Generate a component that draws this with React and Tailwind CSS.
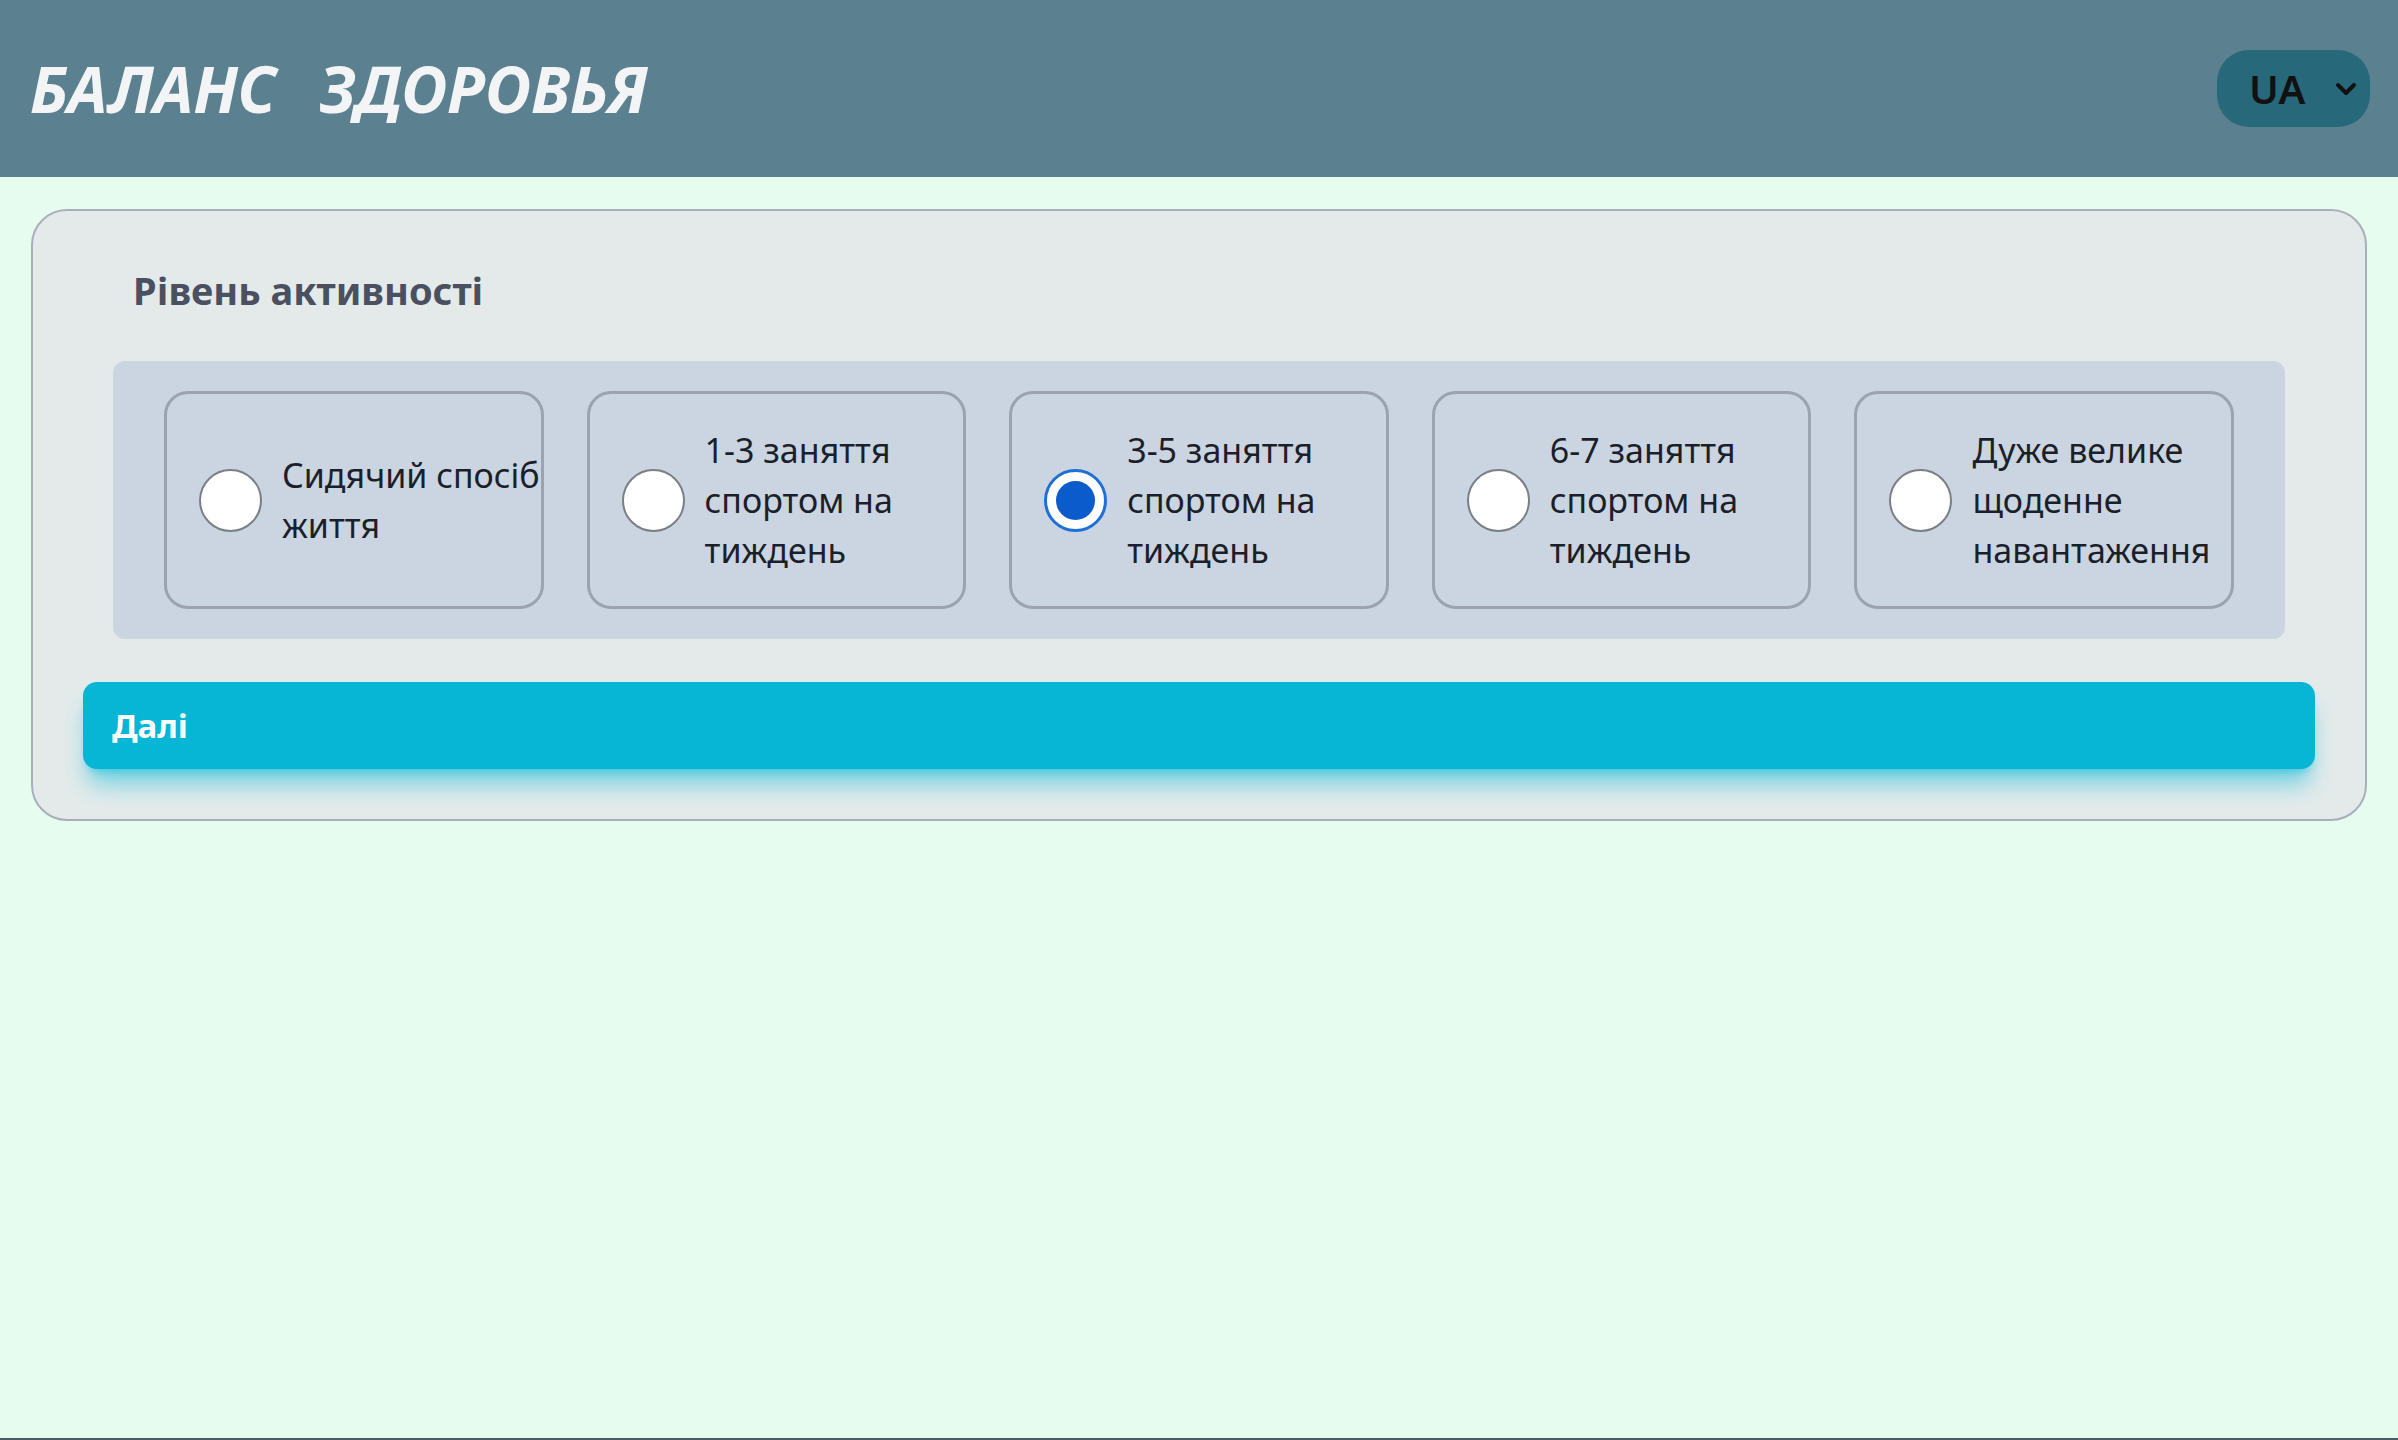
import React, { useState } from "react";

const OPTIONS = [
  { id: "sedentary", label: "Сидячий спосіб життя" },
  { id: "light", label: "1-3 заняття спортом на тиждень" },
  { id: "moderate", label: "3-5 заняття спортом на тиждень" },
  { id: "active", label: "6-7 заняття спортом на тиждень" },
  { id: "extra", label: "Дуже велике щоденне навантаження" },
];

function Radio({ checked }) {
  if (checked) {
    return (
      <span className="flex items-center justify-center w-[63px] h-[63px] shrink-0 rounded-full border-[3px] border-[#1f6fd6] bg-white">
        <span className="w-[39px] h-[39px] rounded-full bg-[#0b5bcc]" />
      </span>
    );
  }
  return (
    <span className="w-[63px] h-[63px] shrink-0 rounded-full border-2 border-[#7a7f86] bg-white" />
  );
}

export default function App() {
  const [level, setLevel] = useState("moderate");

  return (
    <div className="flex flex-col min-h-screen bg-[#e6fcef] font-['Noto_Sans',sans-serif]">
      <header className="flex items-center justify-between h-[177px] bg-[#5b8190] pl-[30px] pr-[28px]">
        <h1 className="text-[64px] font-bold italic text-[#f3f4f6] [word-spacing:27px] leading-none">
          БАЛАНС ЗДОРОВЬЯ
        </h1>
        <div className="flex items-center gap-[30px] h-[77px] w-[153px] rounded-[32px] bg-[#27687b] pl-[32px] pr-[12px]">
          <span className="text-[40px] font-semibold text-[#111] leading-none">UA</span>
          <svg width="22" height="14" viewBox="0 0 22 14" fill="none">
            <path d="M3 3l8 8 8-8" stroke="#111" strokeWidth="4" strokeLinecap="round" strokeLinejoin="round" />
          </svg>
        </div>
      </header>

      <main className="flex-1 px-[31px] pt-[32px]">
        <section className="rounded-[36px] border-2 border-[#a8afb8] bg-[#e4eaea] px-[50px] pb-[50px]">
          <h2 className="mt-[49px] ml-[50px] text-[38px] leading-[60px] font-bold text-[#4b5060]">
            Рівень активності
          </h2>

          <div className="mt-[41px] mx-[30px] flex gap-[43px] rounded-xl bg-[#cbd5e1] px-[51px] py-[30px]">
            {OPTIONS.map((o) => (
              <label
                key={o.id}
                onClick={() => setLevel(o.id)}
                className="flex-1 basis-0 min-w-0 flex items-center gap-[20px] h-[218px] rounded-[24px] border-[3px] border-[#9ca3ae] pl-[32px] cursor-pointer"
              >
                <Radio checked={level === o.id} />
                <span className="w-[264px] shrink-0 text-[34px] leading-[50px] text-[#1b1f2a]">{o.label}</span>
              </label>
            ))}
          </div>

          <button className="mt-[43px] w-full h-[87px] rounded-[14px] bg-[#06b6d4] pl-[29px] text-left text-[33px] font-bold text-white shadow-xl shadow-cyan-500/50">
            Далі
          </button>
        </section>
      </main>

      <div className="h-[2px] bg-[#4b5d63]" />
    </div>
  );
}
